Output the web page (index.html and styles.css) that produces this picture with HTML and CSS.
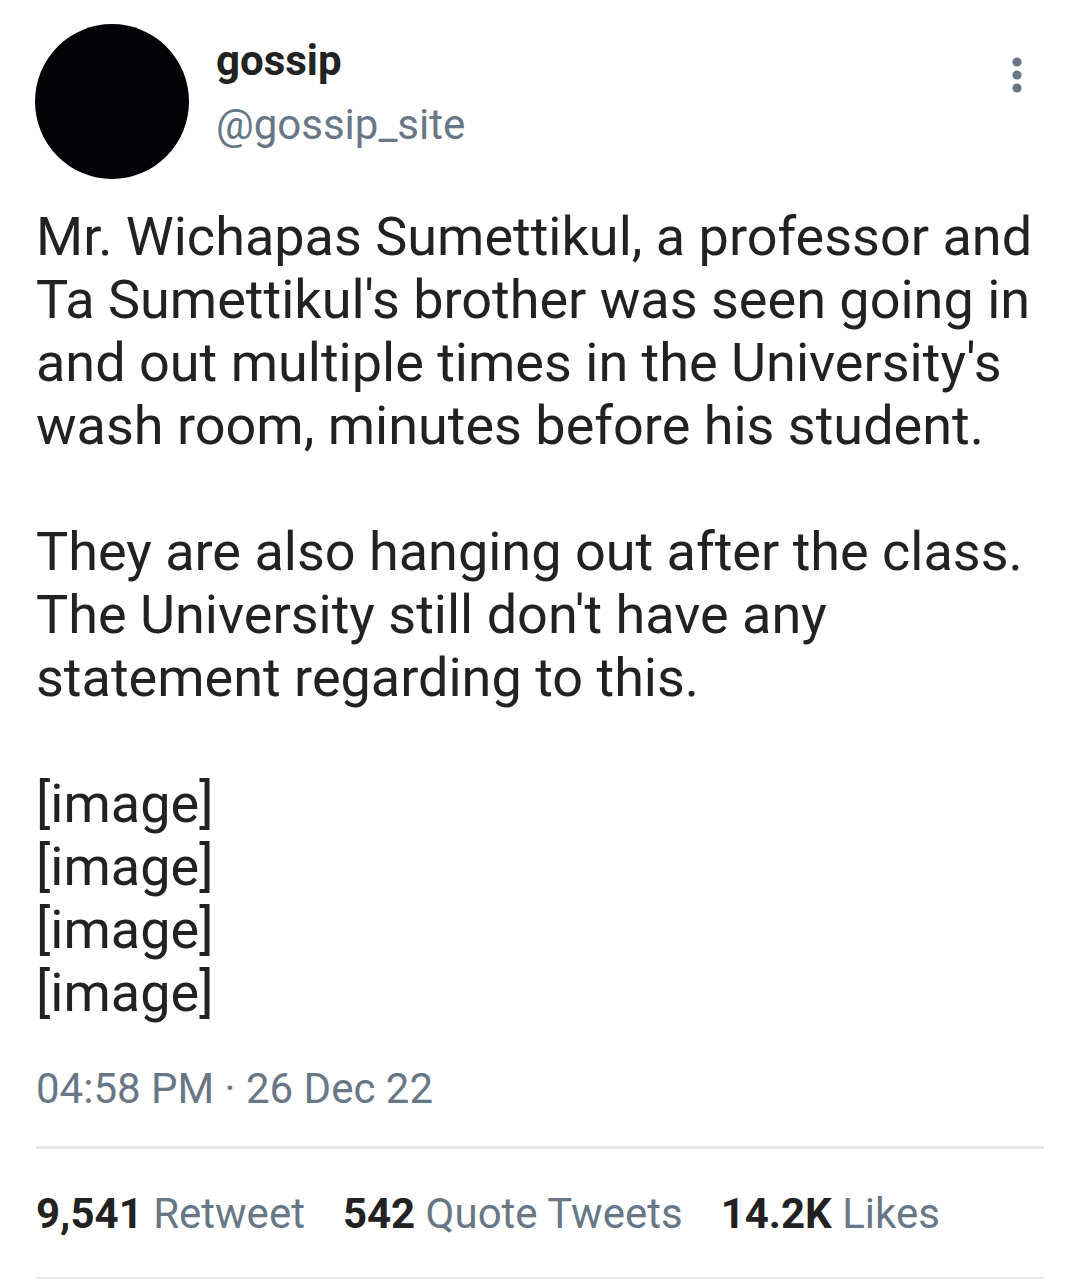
FILE: index.html
```html
<!DOCTYPE html>
<html lang="en">
<head>
<meta charset="utf-8">
<title>gossip on Twitter</title>
<link rel="stylesheet" href="styles.css">
</head>
<body>
<article class="tweet">
  <header class="tweet-head">
    <div class="avatar"></div>
    <div class="names">
      <div class="display-name">gossip</div>
      <div class="handle">@gossip_site</div>
    </div>
    <button class="more" aria-label="More">
      <svg width="12" height="40" viewBox="0 0 12 40"><circle cx="6" cy="7" r="4.6"/><circle cx="6" cy="20" r="4.6"/><circle cx="6" cy="33" r="4.6"/></svg>
    </button>
  </header>
  <p class="tweet-text">Mr. Wichapas Sumettikul, a professor and
Ta Sumettikul's brother was seen going in
and out multiple times in the University's
wash room, minutes before his student.

They are also hanging out after the class.
The University still don't have any
statement regarding to this.

[image]
[image]
[image]
[image]</p>
  <div class="timestamp">04:58 PM · 26 Dec 22</div>
  <div class="stats">
    <span class="stat"><b>9,541</b> Retweet</span>
    <span class="stat"><b>542</b> Quote Tweets</span>
    <span class="stat"><b>14.2K</b> Likes</span>
  </div>
</article>
</body>
</html>
```

FILE: styles.css
```css
html, body {
  margin: 0;
  padding: 0;
  background: #ffffff;
}

body {
  font-family: Roboto, "Noto Sans", "Liberation Sans", sans-serif;
  color: #222222;
  font-size: 42px;
}

.tweet {
  padding: 24px 36px 0 36px;
}

.tweet-head {
  display: flex;
  align-items: flex-start;
}

.avatar {
  width: 154px;
  height: 155px;
  border-radius: 50%;
  background: #030307;
  flex: 0 0 auto;
  margin-left: -1px;
}

.names {
  flex: 1 1 auto;
  margin-left: 27px;
  margin-top: 5px;
}

.display-name {
  font-weight: 700;
  line-height: 64px;
  color: #222222;
}

.handle {
  line-height: 64px;
  color: #687785;
}

.more {
  border: 0;
  background: none;
  padding: 0;
  margin: 31px 21px 0 0;
  fill: #687785;
  line-height: 0;
}

.tweet-text {
  margin: 26px 0 0 0;
  white-space: pre-line;
  font-size: 54px;
  line-height: 63px;
  color: #222222;
}

.timestamp {
  margin-top: 33px;
  line-height: 63px;
  color: #687785;
}

.stats {
  margin-top: 26px;
  border-top: 3px solid #e8e8e8;
  border-bottom: 3px solid #e8e8e8;
  padding: 33px 0 32px 0;
  display: flex;
  gap: 38px;
  line-height: 63px;
  color: #687785;
}

.stat b {
  font-weight: 700;
  color: #222222;
}
```
